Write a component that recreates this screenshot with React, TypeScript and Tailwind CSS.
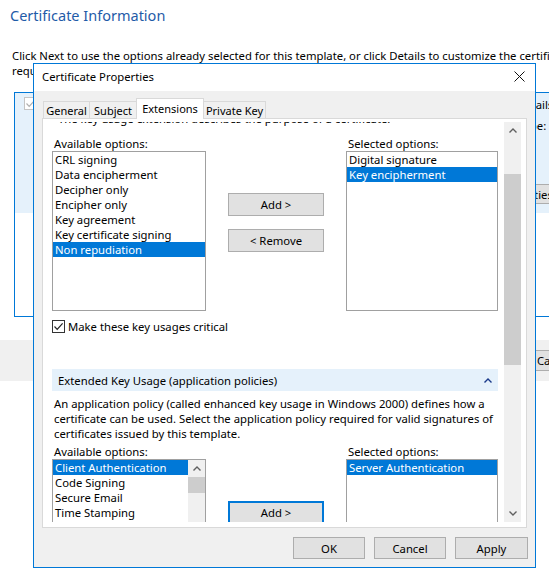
import React from "react";

const keyAvailable = [
  "CRL signing",
  "Data encipherment",
  "Decipher only",
  "Encipher only",
  "Key agreement",
  "Key certificate signing",
  "Non repudiation",
];

const keySelected = ["Digital signature", "Key encipherment"];

const ekuAvailable = ["Client Authentication", "Code Signing", "Secure Email", "Time Stamping", "IP security user"];

function Chevron({ up = true, className = "" }: { up?: boolean; className?: string }) {
  return (
    <svg width="8" height="5" viewBox="0 0 8 5" className={className}>
      <polyline
        points={up ? "0.5,4.5 4,1 7.5,4.5" : "0.5,0.5 4,4 7.5,0.5"}
        fill="none"
        stroke="currentColor"
        strokeWidth="1.4"
      />
    </svg>
  );
}

function CheckMark({ color }: { color: string }) {
  return (
    <svg width="11" height="11" viewBox="0 0 11 11">
      <polyline points="1.5,5.5 4.2,8.3 9.6,2.4" fill="none" stroke={color} strokeWidth="1.2" />
    </svg>
  );
}

function ListBox({
  items,
  selected,
  height,
  scroll = false,
}: {
  items: string[];
  selected: number;
  height: string;
  scroll?: boolean;
}) {
  return (
    <div className={`flex border border-[#a0a0a0] bg-white ${height}`}>
      <div className="flex-1 overflow-hidden">
        {items.map((it, i) => (
          <div
            key={it}
            className={`h-[15px] whitespace-nowrap pl-[2px] leading-[15px] ${
              i === selected ? "bg-[#0078d7] text-white" : ""
            }`}
          >
            {it}
          </div>
        ))}
      </div>
      {scroll && (
        <div className="flex w-[17px] flex-col bg-[#f0f0f0]">
          <div className="flex h-[17px] items-center justify-center text-[#606060]">
            <Chevron />
          </div>
          <div className="h-[16px] bg-[#cdcdcd]" />
        </div>
      )}
    </div>
  );
}

function Button({ label, className = "" }: { label: string; className?: string }) {
  return (
    <div
      className={`flex shrink-0 items-center justify-center whitespace-nowrap border border-[#adadad] bg-[#e1e1e1] ${className}`}
    >
      {label}
    </div>
  );
}

function Tab({ label, active = false, width }: { label: string; active?: boolean; width: string }) {
  return (
    <div
      className={`-ml-px flex shrink-0 items-center justify-center whitespace-nowrap border border-b-0 border-[#d9d9d9] text-[11px] first:ml-0 ${width} ${
        active ? "relative z-10 -mb-px h-[21px] bg-white pb-[2px]" : "h-[17px] bg-[#f0f0f0]"
      }`}
    >
      {label}
    </div>
  );
}

export default function App() {
  return (
    <div className="relative h-[579px] w-[549px] overflow-hidden bg-white text-[11.3px] leading-[15px] text-black [font-family:'Noto_Sans',sans-serif]">
      {/* wizard page behind the dialog */}
      <div className="pl-[10px] pt-[5px] text-[14.5px] leading-[20px] text-[#1f5ba8]">
        Certificate Information
      </div>
      <p className="mt-[23px] whitespace-nowrap pl-[12px]">
        Click Next to use the options already selected for this template, or click Details to customize the certificate
        <br />
        request, and then click Enroll.
      </p>
      <div className="ml-[14px] mt-[14px] flex h-[225px] w-[580px] flex-col border border-r-0 border-[#0078d7]">
        <div className="flex h-[120px] bg-[#e5f1fb] pt-[4px]">
          <div className="ml-[9px] flex h-[13px] w-[13px] shrink-0 items-center justify-center border border-[#c4c4c4] bg-white">
            <CheckMark color="#b0b0b0" />
          </div>
          <div className="ml-[8px] w-[300px] shrink-0">Web Server</div>
          <div className="ml-[142px] flex shrink-0 flex-col">
            <div className="pl-[30px]">Details</div>
            <div className="mt-[6px] pl-[31px]">Type:</div>
            <div className="mt-[51px] flex h-[20px] w-[100px] items-center border border-[#adadad] bg-[#e1e1e1] pl-[10px]">
              Properties
            </div>
          </div>
        </div>
      </div>
      <div className="mt-[23px] flex h-[41px] items-center gap-[8px] bg-[#f0f0f0] pl-[434px]">
        <Button label="Next" className="h-[21px] w-[75px]" />
        <Button label="Cancel" className="h-[21px] w-[75px]" />
      </div>

      {/* Certificate Properties dialog */}
      <div className="absolute left-[33px] top-[63px] flex h-[505px] w-[503px] flex-col border border-[#0078d7] bg-[#f0f0f0]">
        <div className="flex h-[27px] shrink-0 items-center justify-between bg-white pb-[2px] pl-[8px] pr-[10px]">
          <span>Certificate Properties</span>
          <svg width="11" height="11" viewBox="0 0 11 11">
            <path d="M0.5 0.5 L10.5 10.5 M10.5 0.5 L0.5 10.5" stroke="#111" strokeWidth="1" />
          </svg>
        </div>

        <div className="flex flex-col px-[8px]">
          {/* tabs */}
          <div className="mt-[7px] flex h-[20px] items-end pl-[1px]">
            <Tab label="General" width="w-[47px]" />
            <Tab label="Subject" width="w-[48px]" />
            <Tab label="Extensions" width="w-[68px]" active />
            <Tab label="Private Key" width="w-[63px]" />
          </div>

          {/* tab panel */}
          <div className="flex h-[410px] border border-[#d9d9d9] bg-white pb-[5px] pr-[5px] pt-[3px]">
            <div className="flex-1 overflow-hidden">
              <div className="-mt-[11px] pl-[9px]">
                <div className="whitespace-nowrap pl-[6px]">
                  The key usage extension describes the purpose of a certificate.
                </div>

                <div className="mt-[10px] grid grid-cols-[154px_140px_152px]">
                  <div>
                    <div className="pl-[2px]">Available options:</div>
                    <ListBox items={keyAvailable} selected={6} height="h-[160px]" />
                  </div>
                  <div className="flex flex-col items-center gap-[13px] pt-[57px]">
                    <Button label="Add >" className="h-[23px] w-[96px]" />
                    <Button label="< Remove" className="h-[23px] w-[96px]" />
                  </div>
                  <div>
                    <div className="pl-[2px]">Selected options:</div>
                    <ListBox items={keySelected} selected={1} height="h-[160px]" />
                  </div>
                </div>

                <div className="mt-[8px] flex h-[15px] items-center gap-[3px]">
                  <div className="flex h-[13px] w-[13px] items-center justify-center border border-[#333]">
                    <CheckMark color="#222" />
                  </div>
                  <span>Make these key usages critical</span>
                </div>

                <div className="mt-[35px] flex h-[22px] w-[446px] items-center justify-between bg-[#e5f1fb] pl-[6px] pr-[6px]">
                  <span>Extended Key Usage (application policies)</span>
                  <Chevron className="text-[#1b3a8a]" />
                </div>

                <p className="mt-[5px] whitespace-nowrap pl-[2px]">
                  An application policy (called enhanced key usage in Windows 2000) defines how a
                  <br />
                  certificate can be used. Select the application policy required for valid signatures of
                  <br />
                  certificates issued by this template.
                </p>

                <div className="mt-[3px] grid grid-cols-[154px_140px_152px]">
                  <div>
                    <div className="pl-[2px]">Available options:</div>
                    <ListBox items={ekuAvailable} selected={0} height="h-[90px]" scroll />
                  </div>
                  <div className="flex flex-col items-center pt-[57px]">
                    <div className="flex h-[23px] w-[96px] items-center justify-center border-2 border-[#0078d7] bg-[#e1e1e1]">
                      Add &gt;
                    </div>
                  </div>
                  <div>
                    <div className="pl-[2px]">Selected options:</div>
                    <ListBox items={["Server Authentication"]} selected={0} height="h-[90px]" />
                  </div>
                </div>
              </div>
            </div>

            {/* panel scrollbar */}
            <div className="flex w-[17px] flex-col bg-[#f0f0f0]">
              <div className="flex h-[17px] items-center justify-center text-[#606060]">
                <Chevron />
              </div>
              <div className="mt-[35px] h-[191px] bg-[#cdcdcd]" />
              <div className="flex-1" />
              <div className="flex h-[17px] items-center justify-center text-[#606060]">
                <Chevron up={false} />
              </div>
            </div>
          </div>

          {/* dialog buttons */}
          <div className="-mr-px mt-[9px] flex justify-end gap-[9px]">
            <Button label="OK" className="h-[22px] w-[72px]" />
            <Button label="Cancel" className="h-[22px] w-[72px]" />
            <Button label="Apply" className="h-[22px] w-[73px]" />
          </div>
        </div>
      </div>
    </div>
  );
}
